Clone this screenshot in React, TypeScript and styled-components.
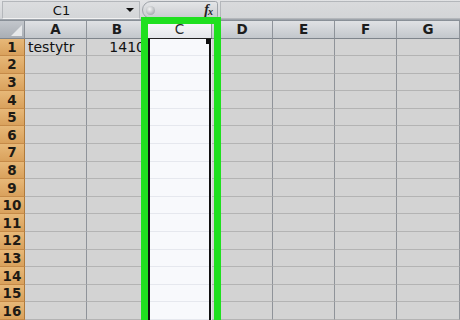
import React from "react";
import styled, { createGlobalStyle } from "styled-components";

const Global = createGlobalStyle`
  html, body { margin: 0; padding: 0; background: #d4d4d4; overflow: hidden; }
  * { box-sizing: border-box; }
`;

const Screen = styled.div`
  position: relative;
  width: 460px;
  height: 320px;
  overflow: hidden;
  background: #d4d4d4;
  font-family: "DejaVu Sans", "Liberation Sans", sans-serif;
  display: flex;
  flex-direction: column;
`;

const Toolbar = styled.div`
  height: 20px;
  display: flex;
  align-items: stretch;
  gap: 2px;
  padding: 1px 0 0 2px;
  background: linear-gradient(#e2e3e5, #d2d4d7);
`;

const NameBox = styled.div`
  width: 138px;
  display: flex;
  align-items: center;
  border: 1px solid #b4b7bb;
  border-bottom-color: #f2f2f2;
  background: linear-gradient(#dcdddf, #d4d6d8);
  color: #111;
  font-size: 13px;
`;

const NameText = styled.span`
  flex: 1;
  text-align: center;
  padding-right: 6px;
`;

const Arrow = styled.span`
  width: 0;
  height: 0;
  margin-right: 5px;
  border-left: 4px solid transparent;
  border-right: 4px solid transparent;
  border-top: 4px solid #111;
`;

const FxPill = styled.div`
  width: 76px;
  display: flex;
  align-items: center;
  justify-content: space-between;
  padding: 0 5px 0 3px;
  border: 1px solid #9ea3a9;
  border-radius: 10px 3px 3px 10px;
  background: linear-gradient(#e4e5e7, #c9ccd0);
`;

const Knob = styled.span`
  width: 9px;
  height: 9px;
  border-radius: 50%;
  background: radial-gradient(circle at 40% 35%, #f4f4f4, #8e949a);
`;

const Fx = styled.span`
  font-family: "Liberation Serif", serif;
  font-style: italic;
  font-weight: bold;
  font-size: 14px;
  color: #222;
  letter-spacing: -1px;
  sub { font-size: 10px; vertical-align: -1px; }
`;

const Formula = styled.div`
  flex: 1;
  border: 1px solid #b4b7bb;
  border-right: none;
  background: linear-gradient(#d9dadc, #d3d5d7);
`;

const Band = styled.div`
  height: 4px;
  background: linear-gradient(#a9aeb5, #7e858e);
`;

const Sheet = styled.div`
  display: grid;
  grid-template-columns: 25px 62px 61px 64px 61px 62px 62px 63px;
  grid-template-rows: 18px;
  grid-auto-rows: 17.6px;
`;

const Corner = styled.div`
  position: relative;
  background: linear-gradient(#c3c7cc, #a9aeb5);
  border-right: 1px solid #8b9097;
  border-bottom: 1px solid #7f858c;
  &::after {
    content: "";
    position: absolute;
    right: 2px;
    bottom: 2px;
    border-left: 11px solid transparent;
    border-bottom: 11px solid #e6e8ea;
  }
`;

const ColHead = styled.div<{ $active?: boolean }>`
  display: flex;
  align-items: center;
  justify-content: center;
  font-size: 13.5px;
  font-weight: ${(p) => (p.$active ? "normal" : "bold")};
  color: ${(p) => (p.$active ? "#2a2a2a" : "#1c1c1c")};
  background: ${(p) =>
    p.$active
      ? "linear-gradient(#fbfbfc, #e4e6ea)"
      : "linear-gradient(#dfe1e4, #c3c7cc)"};
  border-right: 1px solid #8e939a;
  border-bottom: 1px solid ${(p) => (p.$active ? "#222" : "#7f858c")};
`;

const RowHead = styled.div`
  display: flex;
  align-items: center;
  justify-content: center;
  font-size: 13.5px;
  font-weight: bold;
  color: #1e1a14;
  background: linear-gradient(#e7b878, #d9a15c);
  border-right: 1px solid #b07a3a;
  border-bottom: 1px solid #c58a48;
`;

const Cell = styled.div<{ $align?: "left" | "right"; $selected?: boolean }>`
  position: relative;
  display: flex;
  align-items: center;
  justify-content: ${(p) => (p.$align === "right" ? "flex-end" : "flex-start")};
  padding: 0 2px 0 3px;
  font-size: 14px;
  color: #111;
  white-space: nowrap;
  overflow: hidden;
  background: ${(p) => (p.$selected ? "#f8f9fc" : "#d3d3d3")};
  border-right: 1px solid ${(p) => (p.$selected ? "#e6e8ee" : "#8f9399")};
  border-bottom: ${(p) => (p.$selected ? "none" : "1px solid #b3b3b3")};
  box-shadow: ${(p) =>
    p.$selected
      ? "inset 2px 0 0 #111, inset -2px 0 0 #111, inset 0 -1px 0 #e6e8ee"
      : "none"};
`;

const FillHandle = styled.span`
  position: absolute;
  right: 0;
  top: 0;
  width: 5px;
  height: 5px;
  background: #111;
`;

const Highlight = styled.div`
  position: absolute;
  left: 141px;
  top: 17px;
  width: 80px;
  height: 320px;
  border: 7px solid #1fe01f;
  pointer-events: none;
`;

const columns = ["A", "B", "C", "D", "E", "F", "G"];
const rows = Array.from({ length: 16 }, (_, i) => i + 1);

export default function App() {
  return (
    <>
      <Global />
      <Screen>
        <Toolbar>
          <NameBox>
            <NameText>C1</NameText>
            <Arrow />
          </NameBox>
          <FxPill>
            <Knob />
            <Fx>
              f<sub>x</sub>
            </Fx>
          </FxPill>
          <Formula />
        </Toolbar>
        <Band />
        <Sheet>
          <Corner />
          {columns.map((c) => (
            <ColHead key={c} $active={c === "C"}>
              {c}
            </ColHead>
          ))}
          {rows.map((r) => (
            <React.Fragment key={r}>
              <RowHead>{r}</RowHead>
              {columns.map((c) => {
                let text = "";
                let align: "left" | "right" = "left";
                if (r === 1 && c === "A") text = "testytr";
                if (r === 1 && c === "B") {
                  text = "1410";
                  align = "right";
                }
                return (
                  <Cell key={c} $align={align} $selected={c === "C"}>
                    {text}
                    {r === 1 && c === "C" && <FillHandle />}
                  </Cell>
                );
              })}
            </React.Fragment>
          ))}
        </Sheet>
        <Highlight />
      </Screen>
    </>
  );
}
